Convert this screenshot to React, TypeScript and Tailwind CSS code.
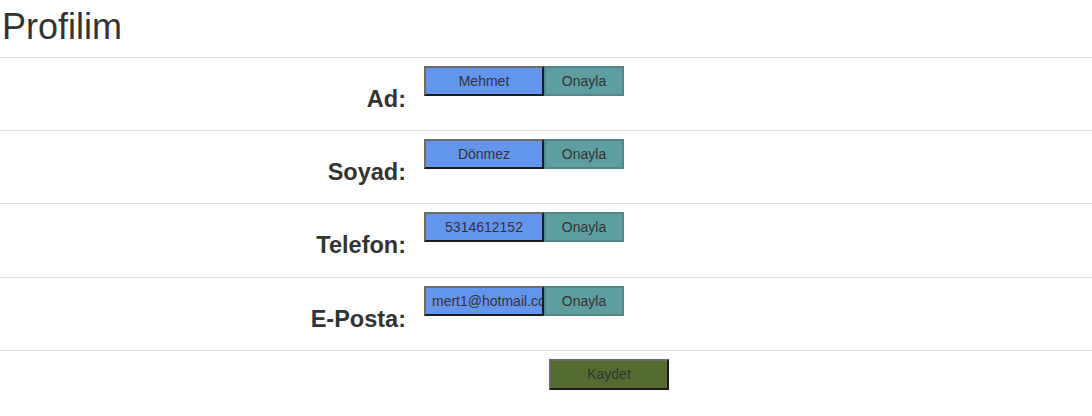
import React from 'react';

const rows = [
    { label: 'Ad:', value: 'Mehmet', h: 'h-[73px]', pad: 'px-[2px]' },
    { label: 'Soyad:', value: 'Dönmez', h: 'h-[73px]', pad: 'px-[2px]' },
    { label: 'Telefon:', value: '5314612152', h: 'h-[74px]', pad: 'px-[2px]' },
    { label: 'E-Posta:', value: 'mert1@hotmail.com', h: 'h-[73px]', pad: 'pl-[6px] pr-0' },
];

const App: React.FC = () => {
    return (
        <div className="w-[1092px] h-[416px] bg-white text-[#333] font-['Liberation_Sans',Arial,sans-serif]">
            <h1 className="text-[36px] leading-[40px] pt-[7px] pl-[2px] h-[57px]">Profilim</h1>
            {rows.map((row) => (
                <div key={row.label} className={`flex border-t border-[#ddd] ${row.h}`}>
                    <div className="w-[416px] pr-[10px] pt-[27px] text-right">
                        <span className="text-[23.5px] leading-[28px] font-bold">{row.label}</span>
                    </div>
                    <div className="pl-[8px] pt-[8px] flex items-start">
                        <input
                            readOnly
                            value={row.value}
                            className={`w-[120px] h-[30px] bg-[#6495ed] text-[14px] text-[#333] text-center border-2 border-t-[#6b6b6b] border-l-[#6b6b6b] border-b-[#1c1c1c] border-r-[#1c1c1c] outline-none ${row.pad}`}
                        />
                        <button className="w-[80px] h-[30px] bg-[#5f9ea0] text-[14px] text-[#333] border-2 border-[#4f8788]">
                            Onayla
                        </button>
                    </div>
                </div>
            ))}
            <div className="border-t border-[#ddd] pt-[8px] pl-[549px]">
                <button className="w-[120px] h-[31px] bg-[#556b2f] text-[14px] text-[#333] border-2 border-t-[#6b6b6b] border-l-[#6b6b6b] border-b-[#1c1c1c] border-r-[#1c1c1c]">
                    Kaydet
                </button>
            </div>
        </div>
    );
};

export default App;
